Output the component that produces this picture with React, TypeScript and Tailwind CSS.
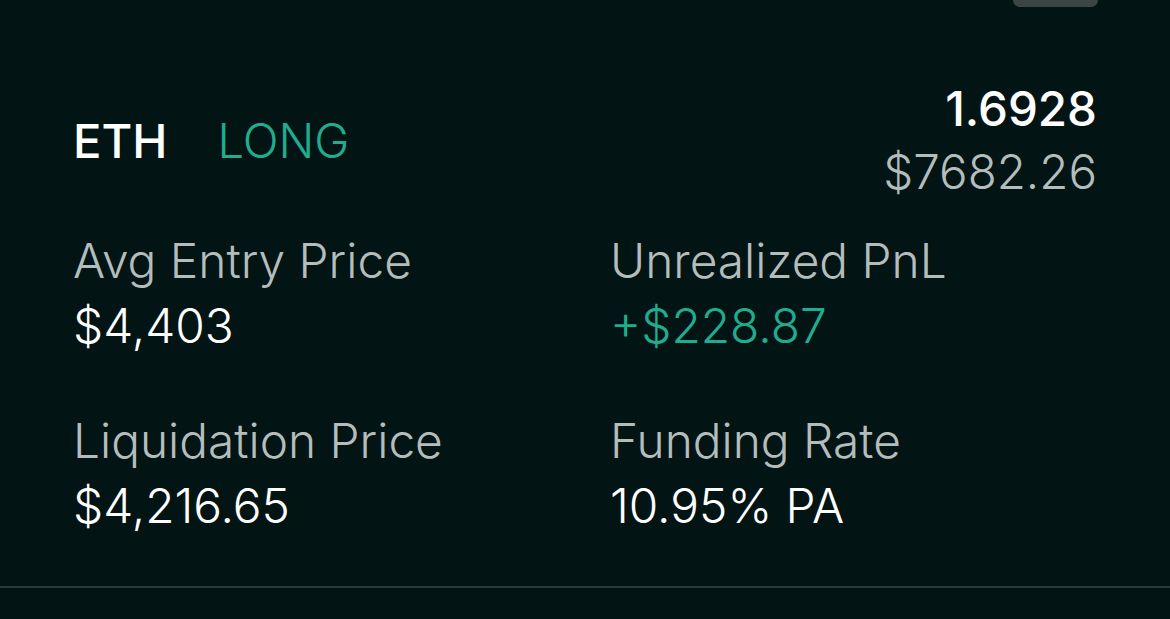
import React from "react";

export default function App() {
  return (
    <div
      className="w-[1170px] h-[619px] bg-[#021414] overflow-hidden flex flex-col"
      style={{ fontFamily: "Inter, 'Noto Sans', sans-serif" }}
    >
      <div className="flex justify-end pr-[72px]">
        <div className="w-[85px] h-[7px] rounded-b-[8px] bg-[#3a4644]" />
      </div>
      <div className="px-[73px] pt-[70px] pb-[47px]">
        <div className="flex items-center justify-between">
          <div className="flex items-center gap-[50px] text-[47.2px] leading-[63px]">
            <span className="font-[550] text-white">ETH</span>
            <span className="font-[350] text-[#1eae8f]">LONG</span>
          </div>
          <div className="flex flex-col items-end text-[47.5px] leading-[63px]">
            <span className="font-[550] text-white">1.6928</span>
            <span className="font-[350] text-[#b4bdbc]">$7682.26</span>
          </div>
        </div>
        <div className="mt-[26px] grid grid-cols-[537px_1fr] gap-y-[50px] text-[47.8px] leading-[65px] font-[350]">
          <div className="flex flex-col">
            <span className="text-[#b4bdbc]">Avg Entry Price</span>
            <span className="text-white">$4,403</span>
          </div>
          <div className="flex flex-col">
            <span className="text-[#b4bdbc]">Unrealized PnL</span>
            <span className="text-[#1eae8f]">+$228.87</span>
          </div>
          <div className="flex flex-col">
            <span className="text-[#b4bdbc]">Liquidation Price</span>
            <span className="text-white">$4,216.65</span>
          </div>
          <div className="flex flex-col">
            <span className="text-[#b4bdbc]">Funding Rate</span>
            <span className="text-white">10.95% PA</span>
          </div>
        </div>
      </div>
      <div className="h-[2px] bg-[#2c3a38]" />
    </div>
  );
}
